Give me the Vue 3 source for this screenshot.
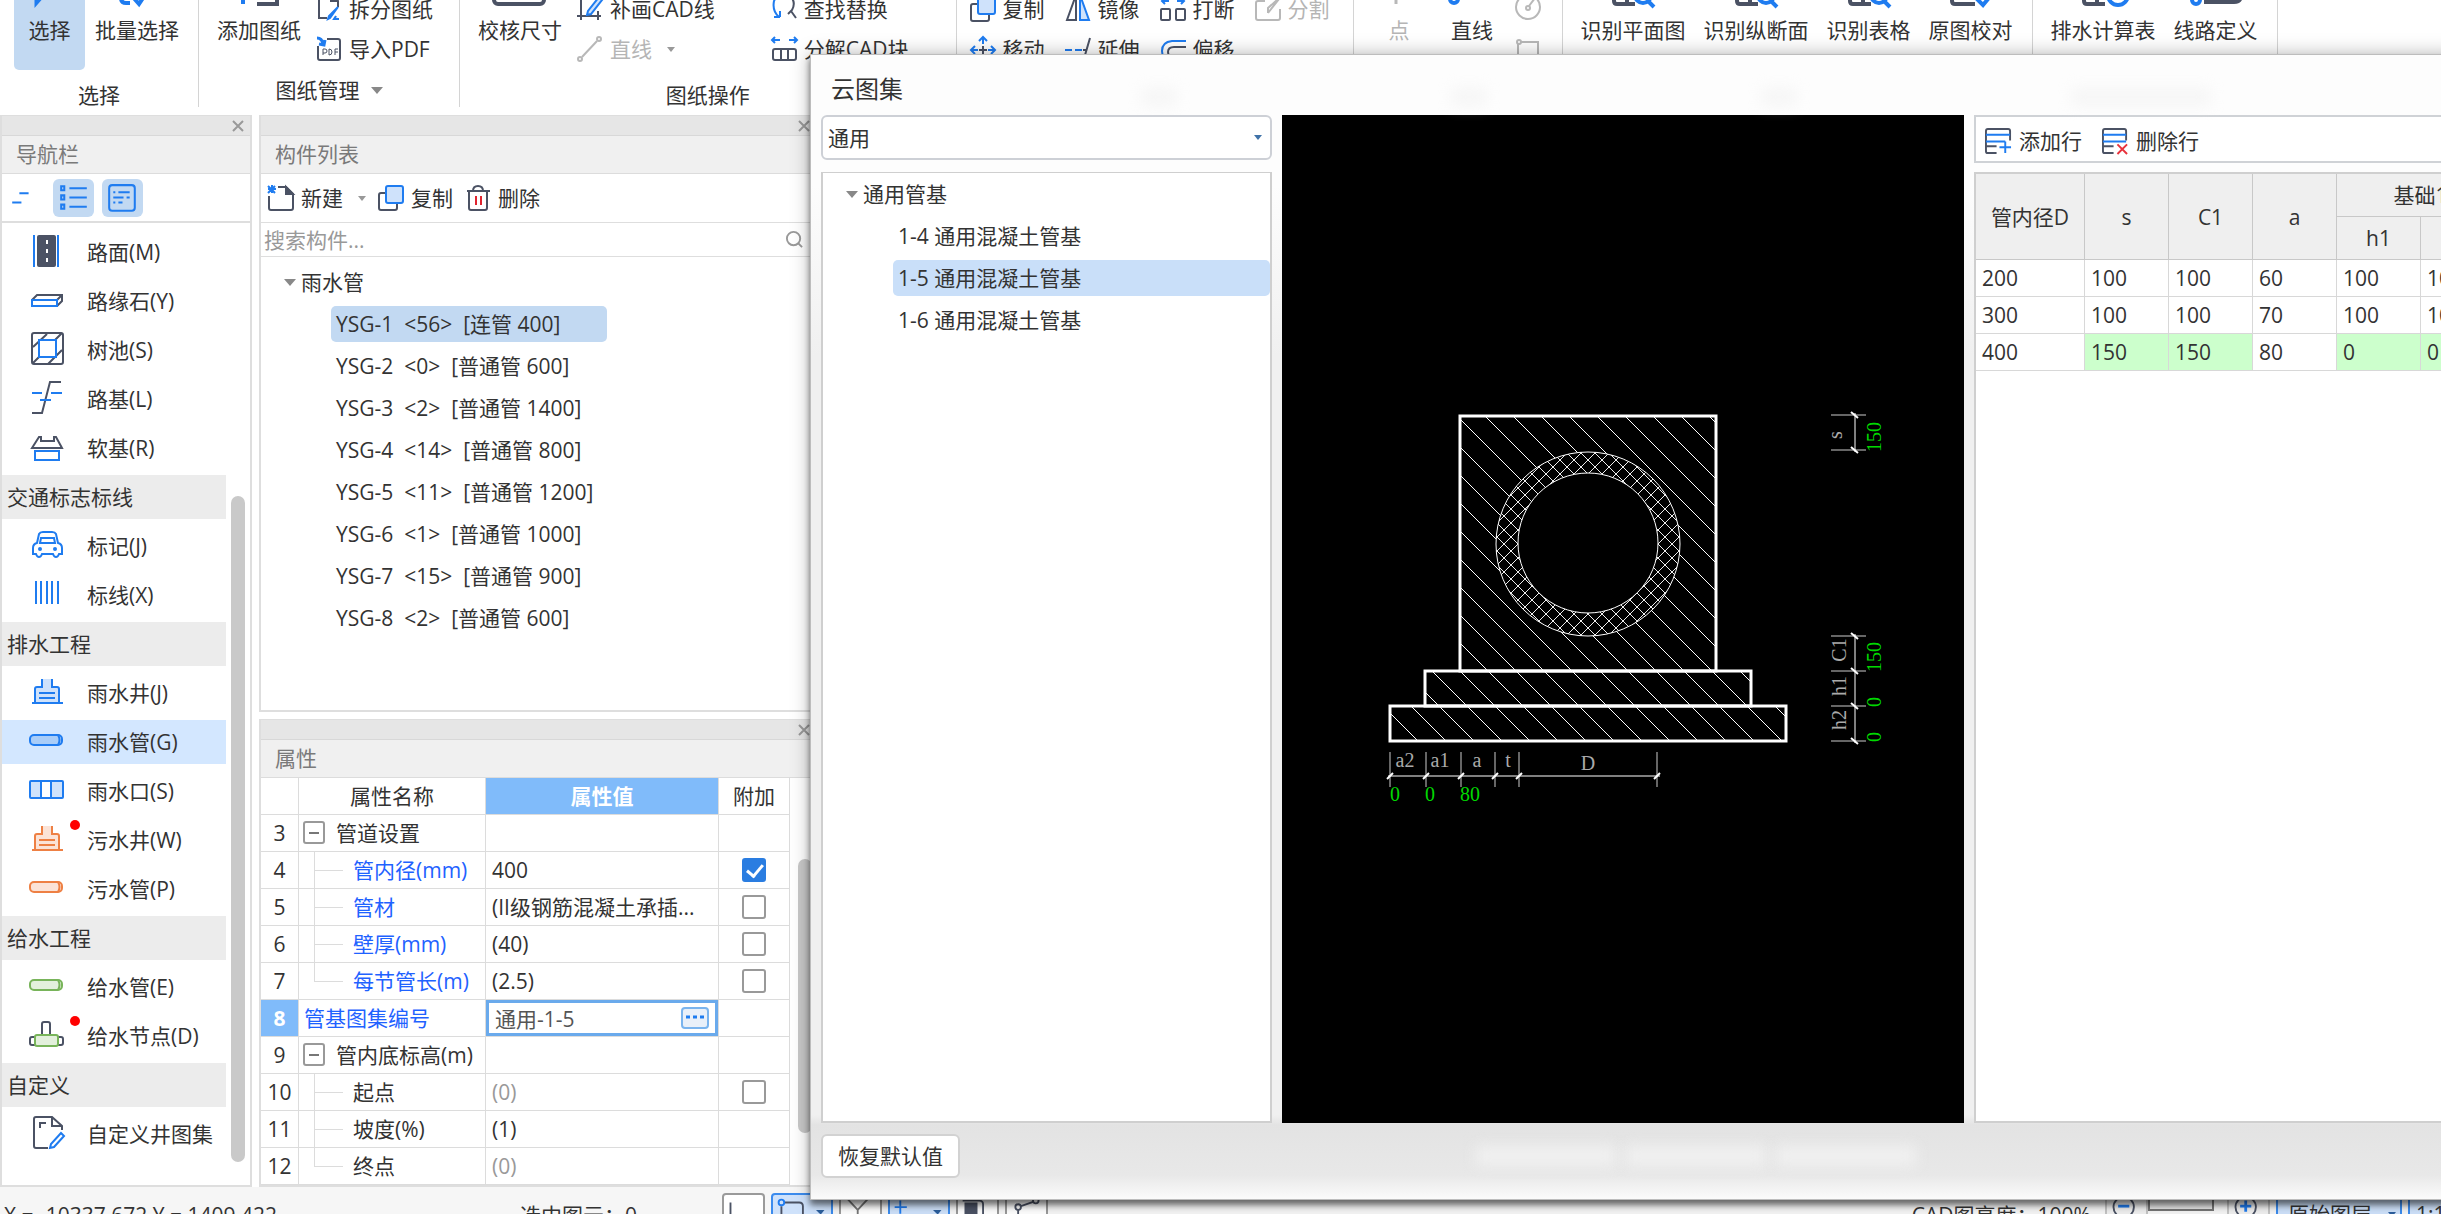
<script setup>
import { ref } from 'vue';

// icon markup, small ones are drawn on 26x26, nav ones on 36x36
const D = 'stroke="#4b5264"'
const B = 'stroke="#1f7cf0"'
const G = 'stroke="#b8b8b8"'
const well = (c, f) => `<path d="M7 28V14q0-2 2-2h5V4h10v8h5q2 0 2 2v14z" fill="${f}"/><path d="M14 4v8H9q-2 0-2 2v14M24 4v8h5q2 0 2 2v14M4 28h31M11 18h16M11 23h16" stroke="${c}"/>`
const pipe = (c, f) => `<rect x="2" y="11" width="32" height="10" rx="4" fill="${f}" stroke="${c}"/><path d="M30 11q3 5 0 10" stroke="${c}"/>`

const icons = {
    split: `<path d="M11 22H3V-2h12l7 7v6M15-2v7h7" ${D}/><path d="M22 11L14 22l-2 1 1-3z M20 20l-2 3h5" ${B} fill="#cfe2fb"/>`,
    pdf: `<path d="M11 3h11q2 0 2 2v17q0 2-2 2H4q-2 0-2-2V10" ${D}/><path d="M1 2q5 0 6 6M3 8l5 1 1-5" ${B} stroke-width="3"/><path d="M7 19v-6h2q2 0 2 2t-2 2H7M13 13v6q3 0 3-3t-3-3M19 19v-6h3M19 16h3" ${D} stroke-width="1"/>`,
    cadline: `<path d="M4-2v26M0 20h24M21 15v9M2 1h10" ${D}/><path d="M22 1l3 3-11 14-4 1 1-4z" ${B} fill="#cfe2fb"/>`,
    line: `<path d="M5 21L20 5" ${G}/><circle cx="3" cy="23" r="2" ${G}/><circle cx="22" cy="3" r="2" ${G}/>`,
    find: `<path d="M8 21Q1 15 3 5L6-1M9 21H3M9 21v-6" ${B}/><path d="M17-2q9 7 4 16l-4 4M20 15l5 7" ${D}/>`,
    explode: `<rect x="2" y="13" width="23" height="11" rx="2" ${D}/><path d="M10 13v11M17 13v11" ${D}/><path d="M1 4h8M4 1L1 4l3 3M18 4h8M23 1l3 3-3 3" ${B}/>`,
    copy: `<path d="M7 8H3q-2 0-2 2v13q0 2 2 2h14q2 0 2-2v-4" ${D}/><rect x="8" y="1" width="17" height="17" rx="2" ${B} fill="#cfe2fb"/>`,
    mirror: `<path d="M11-1v25H2z" ${D}/><path d="M15-1v25h9z" ${B} fill="#cfe2fb"/>`,
    breakup: `<rect x="1" y="13" width="9" height="11" rx="1" ${D}/><rect x="16" y="13" width="9" height="11" rx="1" ${D}/><path d="M2 5h7M5 2L2 5l3 3M17 5h7M21 2l3 3-3 3" ${B}/>`,
    cut: `<path d="M10 5H3q-2 0-2 2v15q0 2 2 2h20q2 0 2-2v-9M13 17L24 3M13 17v-5l9-8" ${G}/>`,
    move: `<path d="M13 8V1M9 5l4-4 4 4M8 14H1M5 10l-4 4 4 4M18 14h7M21 10l4 4-4 4M13 20v5M9 22l4 4 4-4" ${B}/><path d="M9 14h8M13 10v8" ${D}/>`,
    extend: `<path d="M0 14h7M10 14h7" ${B}/><path d="M18 14h4M25 2L18 26" ${D}/>`,
    offset: `<path d="M26 5H12Q2 6 2 15t9 10" ${B}/><path d="M26 11H14q-6 0-6 5t6 5h12" ${D}/>`,
    arc: `<circle cx="13" cy="11" r="12" ${G}/><circle cx="13" cy="12" r="2" ${G}/><path d="M14 10l6-8" ${G}/>`,
    box: `<path d="M3 6h20v20H3z" ${G}/><circle cx="4" cy="6" r="2" ${G} fill="#fff"/>`,
    create: `<path d="M10 2h8l7 7v14q0 2-2 2H3q-2 0-2-2V11" ${D}/><path d="M18 2v7h7z" ${D} fill="#4b5264"/><path d="M0 1l7 7M7 1L0 8M0 4h8M4 0v8" ${B}/>`,
    trash: `<path d="M2 6h23M4 6v17q0 2 2 2h14q2 0 2-2V6M8 6q0-5 5-5t5 5" ${D}/><path d="M11 11v9M16 11v9" stroke="#e0242f"/>`,
    addRow: `<path d="M26 13V3q0-2-2-2H3Q1 1 1 3v21q0 2 2 2h9M1 19h11" ${D}/><path d="M1 7h25M1 14h20M21 14v12M15 20h12" ${B}/>`,
    delRow: `<path d="M25 13V3q0-2-2-2H3Q1 1 1 3v21q0 2 2 2h9M1 19h11" ${D}/><path d="M1 7h24M1 14h24" ${B}/><path d="M16 17l10 10M26 17L16 27" stroke="#e8323c"/>`,
    // bottoms of the big ribbon buttons
    cursor: `<path d="M8 4v30l8-9" ${B} stroke-width="3"/>`,
    batch: `<path d="M6 6v22q0 5 5 5h4M17 26l7 8 8-12" ${B} stroke-width="4"/>`,
    addDrawing: `<path d="M6 6v28" ${B} stroke-width="4"/><path d="M20 34h20V6H20" ${D} stroke-width="4"/>`,
    check: `<rect x="-4" y="4" width="50" height="30" rx="4" ${D} stroke-width="4"/>`,
    point: `<path d="M19 14v20" ${G} stroke-width="3"/>`,
    bigLine: `<path d="M4 28L34-20" ${D} stroke-width="3"/><circle cx="4" cy="29" r="4" ${B} stroke-width="4"/>`,
    recog: `<path d="M24 34H6q-3 0-3-3V6h30M16 10v24" ${D} stroke-width="4"/><circle cx="32" cy="25" r="8" ${B} stroke-width="4"/><path d="M37 31l6 6" ${B} stroke-width="4"/>`,
    proof: `<path d="M26 34H6q-3 0-3-3V6h30" ${D} stroke-width="4"/><path d="M26 27l8 8 10-12" ${B} stroke-width="4"/>`,
    calc: `<path d="M24 34H6q-3 0-3-3V6h30M16 10v24" ${D} stroke-width="4"/><circle cx="37" cy="25" r="10" ${B} stroke-width="4"/><path d="M33 22l4 5 4-5" ${B} stroke-width="3"/>`,
    route: `<path d="M10 31h30q6 0 6-6" ${D} stroke-width="6"/><circle cx="2" cy="30" r="4" ${B} stroke-width="4"/>`,
    // navigation
    road: `<path d="M6 1v32M30 1v32" ${B}/><rect x="9" y="1" width="19" height="32" rx="2" fill="#4b5264"/><path d="M19 6v4M19 15v4M19 24v4" stroke="#fff"/>`,
    curb: `<path d="M4 17l5-5h25v6l-5 5M29 17l5-5" ${D}/><rect x="4" y="17" width="25" height="6" ${B} fill="#fff"/>`,
    tree: `<rect x="4" y="1" width="31" height="31" rx="2" ${D}/><path d="M5 15L19 2M27 8l7-7M5 31l7-7M20 32l14-14" ${D}/><rect x="11" y="8" width="17" height="17" ${B} fill="#fff"/>`,
    base: `<path d="M4 32h10L22 1h11" ${D}/><path d="M4 12h10M23 12h11M12 19h11" ${B}/>`,
    soft: `<path d="M4 18L11 7h2v4h13V7h2l6 11z" ${D}/><rect x="7" y="21" width="24" height="9" ${B}/>`,
    car: `<path d="M9 15l2-9q1-2 4-2h9q3 0 4 2l2 9q4 1 4 5v6h-3q-1 3-3 3t-3-3H14q-1 3-3 3t-3-3H5v-6q0-4 4-5z" ${B}/><path d="M12 15l1-5h13l1 5z" ${B}/><circle cx="12" cy="21" r="2" fill="#1f7cf0"/><circle cx="27" cy="21" r="2" fill="#1f7cf0"/>`,
    marks: `<path d="M8 4v23M13 4v23M19 4v23M24 4v23M30 4v23" ${B}/>`,
    well: well('#1f7cf0', '#cfe2fb'),
    pipe: pipe('#1f7cf0', '#a9cdf8'),
    inlet: `<rect x="2" y="8" width="33" height="17" rx="1" ${B} fill="#cfe2fb"/><path d="M13 8h10v17H13z" ${B} fill="#fff"/>`,
    sewWell: well('#ee8044', '#fbe3d7'),
    sewPipe: pipe('#ee8044', '#fbe3d7'),
    supPipe: pipe('#78b45a', '#e3f0dc'),
    node: `<path d="M14 18V6q0-2 2-2h4q2 0 2 2v12M7 19H4q-2 0-2 2v4q0 2 2 2h3M30 19h3q2 0 2 2v4q0 2-2 2h-3" ${D}/><rect x="7" y="17" width="23" height="11" rx="2" stroke="#78b45a" fill="#e3f0dc"/>`,
    custom: `<path d="M20 32H8q-2 0-2-2V3q0-2 2-2h16l10 9v4M24 1v9h10M12 12V7h6" ${D}/><path d="M33 17l3 3-10 11-4 1 1-4z" ${B}/>`,
}

const smallCols = [
    [{ icon: 'copy', text: '复制' }, { icon: 'move', text: '移动' }],
    [{ icon: 'mirror', text: '镜像' }, { icon: 'extend', text: '延伸' }],
    [{ icon: 'breakup', text: '打断' }, { icon: 'offset', text: '偏移' }],
    [{ icon: 'cut', text: '分割', off: true }],
]
const recogTools = [
    { icon: 'recog', text: '识别平面图' },
    { icon: 'recog', text: '识别纵断面' },
    { icon: 'recog', text: '识别表格' },
    { icon: 'proof', text: '原图校对' },
]
const tableTools = [
    { icon: 'calc', text: '排水计算表' },
    { icon: 'route', text: '线路定义' },
]

const activeNav = ref('雨水管(G)')
const navRows = [
    { text: '路面(M)', icon: 'road' },
    { text: '路缘石(Y)', icon: 'curb' },
    { text: '树池(S)', icon: 'tree' },
    { text: '路基(L)', icon: 'base' },
    { text: '软基(R)', icon: 'soft' },
    { text: '交通标志标线', head: true },
    { text: '标记(J)', icon: 'car' },
    { text: '标线(X)', icon: 'marks' },
    { text: '排水工程', head: true },
    { text: '雨水井(J)', icon: 'well' },
    { text: '雨水管(G)', icon: 'pipe' },
    { text: '雨水口(S)', icon: 'inlet' },
    { text: '污水井(W)', icon: 'sewWell', dot: true },
    { text: '污水管(P)', icon: 'sewPipe' },
    { text: '给水工程', head: true },
    { text: '给水管(E)', icon: 'supPipe' },
    { text: '给水节点(D)', icon: 'node', dot: true },
    { text: '自定义', head: true },
    { text: '自定义井图集', icon: 'custom' },
]

const search = ref('')
const activePipe = ref(0)
const pipes = [
    'YSG-1  <56>  [连管 400]',
    'YSG-2  <0>  [普通管 600]',
    'YSG-3  <2>  [普通管 1400]',
    'YSG-4  <14>  [普通管 800]',
    'YSG-5  <11>  [普通管 1200]',
    'YSG-6  <1>  [普通管 1000]',
    'YSG-7  <15>  [普通管 900]',
    'YSG-8  <2>  [普通管 600]',
]

const props = ref([
    { no: 3, name: '管道设置', kind: 'parent' },
    { no: 4, name: '管内径(mm)', kind: 'child', blue: true, value: '400', extra: true },
    { no: 5, name: '管材', kind: 'child', blue: true, value: '(II级钢筋混凝土承插...', extra: false },
    { no: 6, name: '壁厚(mm)', kind: 'child', blue: true, value: '(40)', extra: false },
    { no: 7, name: '每节管长(m)', kind: 'child last', blue: true, value: '(2.5)', extra: false },
    { no: 8, name: '管基图集编号', kind: 'plain', blue: true, value: '通用-1-5', edit: true },
    { no: 9, name: '管内底标高(m)', kind: 'parent' },
    { no: 10, name: '起点', kind: 'child', value: '(0)', grey: true, extra: false },
    { no: 11, name: '坡度(%)', kind: 'child', value: '(1)' },
    { no: 12, name: '终点', kind: 'child last', value: '(0)', grey: true },
])

const atlas = ref('通用')
const activeAtlas = ref(1)
const atlasItems = ['1-4 通用混凝土管基', '1-5 通用混凝土管基', '1-6 通用混凝土管基']

const sizes = [
    { cells: [200, 100, 100, 60, 100, 100], changed: [] },
    { cells: [300, 100, 100, 70, 100, 100], changed: [] },
    { cells: [400, 150, 150, 80, 0, 0], changed: [1, 2, 4, 5] },
]

// hatch lines, every one runs from the top (y 400) to the bottom (y 760)
const hatch = []
for (let c = 621; c < 1400; c += 28) hatch.push(c)
const cross = []
for (let c = -196; c <= 196; c += 14) cross.push(c)

const vTicks = [415, 450, 636, 671, 706, 741]
const hTicks = [1390, 1426, 1461, 1495, 1519, 1657]
</script>

<template>
    <div class="app">
        <header class="ribbon">
            <section class="group">
                <div class="tools toolsSelect">
                    <button class="big on"><svg viewBox="0 0 44 36" v-html="icons.cursor"></svg>选择</button>
                    <button class="big"><svg viewBox="0 0 44 36" v-html="icons.batch"></svg>批量选择</button>
                </div>
                <div class="groupName">选择</div>
            </section>
            <section class="group">
                <div class="tools toolsFiles">
                    <button class="big"><svg viewBox="0 0 44 36" v-html="icons.addDrawing"></svg>添加图纸</button>
                    <div class="smallList">
                        <button class="small"><svg viewBox="0 0 26 26" v-html="icons.split"></svg>拆分图纸</button>
                        <button class="small"><svg viewBox="0 0 26 26" v-html="icons.pdf"></svg>导入PDF</button>
                    </div>
                </div>
                <button class="groupName groupMenu">图纸管理<i class="arrow"></i></button>
            </section>
            <section class="group">
                <div class="tools toolsEdit">
                    <button class="big"><svg viewBox="0 0 44 36" v-html="icons.check"></svg>校核尺寸</button>
                    <div class="smallList">
                        <button class="small"><svg viewBox="0 0 26 26" v-html="icons.cadline"></svg>补画CAD线</button>
                        <button class="small off" disabled><svg viewBox="0 0 26 26" v-html="icons.line"></svg>直线<i class="arrow tiny"></i></button>
                    </div>
                    <div class="smallList farList">
                        <button class="small"><svg viewBox="0 0 26 26" v-html="icons.find"></svg>查找替换</button>
                        <button class="small"><svg viewBox="0 0 26 26" v-html="icons.explode"></svg>分解CAD块</button>
                    </div>
                </div>
                <div class="groupName">图纸操作</div>
            </section>
            <section class="group">
                <div class="tools toolsModify">
                    <div v-for="(col, i) in smallCols" :key="i" class="smallList">
                        <button v-for="t in col" :key="t.text" class="small" :class="{ off: t.off }" :disabled="t.off">
                            <svg viewBox="0 0 26 26" v-html="icons[t.icon]"></svg>{{ t.text }}
                        </button>
                    </div>
                </div>
                <div class="groupName"></div>
            </section>
            <section class="group">
                <div class="tools toolsDraw">
                    <button class="big off" disabled><svg viewBox="0 0 44 36" v-html="icons.point"></svg>点</button>
                    <button class="big"><svg viewBox="0 0 44 36" v-html="icons.bigLine"></svg>直线</button>
                    <div class="smallList">
                        <button class="small" aria-label="圆"><svg viewBox="0 0 26 26" v-html="icons.arc"></svg></button>
                        <button class="small" aria-label="矩形"><svg viewBox="0 0 26 26" v-html="icons.box"></svg></button>
                    </div>
                </div>
                <div class="groupName"></div>
            </section>
            <section v-for="(list, i) in [recogTools, tableTools]" :key="i" class="group">
                <div class="tools">
                    <button v-for="t in list" :key="t.text" class="big"><svg viewBox="0 0 44 36" v-html="icons[t.icon]"></svg>{{ t.text }}</button>
                </div>
                <div class="groupName"></div>
            </section>
        </header>

        <main class="work">
            <aside class="panel navPanel">
                <div class="grip"><button class="close" aria-label="关闭"><svg viewBox="0 0 12 12"><path d="M1 1l10 10M11 1L1 11" /></svg></button></div>
                <h2 class="panelTitle">导航栏</h2>
                <div class="navTools">
                    <button class="tool" aria-label="折叠"><svg viewBox="0 0 40 38"><path d="M15 14h9M8 23h9" stroke="#1f7cf0" /></svg></button>
                    <button class="tool lit" aria-label="列表"><svg viewBox="0 0 40 38"><path d="M16 9h17M16 18h17M16 27h17" stroke="#1f7cf0" /><path d="M8 7h3v4H8zM8 16h3v4H8zM8 25h3v4H8z" stroke="#1f7cf0" /></svg></button>
                    <button class="tool lit" aria-label="详情"><svg viewBox="0 0 40 38"><rect x="7" y="6" width="25" height="25" rx="3" stroke="#1f7cf0" /><path d="M11 13h2M16 13h11M11 18h10M24 18h3M11 23h2M16 23h4" stroke="#1f7cf0" /></svg></button>
                </div>
                <nav class="navBody">
                    <div class="navList">
                        <template v-for="r in navRows" :key="r.text">
                            <h3 v-if="r.head" class="navHead">{{ r.text }}</h3>
                            <button v-else class="navItem" :class="{ active: activeNav == r.text }" @click="activeNav = r.text">
                                <svg viewBox="0 0 36 36" v-html="icons[r.icon]"></svg>{{ r.text }}
                                <i v-if="r.dot" class="dot"></i>
                            </button>
                        </template>
                    </div>
                    <div class="scroll navScroll"></div>
                </nav>
            </aside>

            <div class="column">
                <section class="panel listPanel">
                    <div class="grip"><button class="close" aria-label="关闭"><svg viewBox="0 0 12 12"><path d="M1 1l10 10M11 1L1 11" /></svg></button></div>
                    <h2 class="panelTitle">构件列表</h2>
                    <div class="listTools">
                        <button class="small"><svg viewBox="0 0 26 26" v-html="icons.create"></svg>新建<i class="arrow tiny"></i></button>
                        <button class="small"><svg viewBox="0 0 26 26" v-html="icons.copy"></svg>复制</button>
                        <button class="small"><svg viewBox="0 0 26 26" v-html="icons.trash"></svg>删除</button>
                    </div>
                    <div class="search">
                        <input v-model="search" type="text" placeholder="搜索构件..." aria-label="搜索构件">
                        <svg viewBox="0 0 20 20"><circle cx="9" cy="9" r="7" /><path d="M14 14l4 4" /></svg>
                    </div>
                    <div class="tree">
                        <div class="treeRoot"><i class="arrow"></i>雨水管</div>
                        <button v-for="(p, i) in pipes" :key="p" class="treeItem" :class="{ active: activePipe == i }" @click="activePipe = i">{{ p }}</button>
                    </div>
                </section>

                <section class="panel propPanel">
                    <div class="grip"><button class="close" aria-label="关闭"><svg viewBox="0 0 12 12"><path d="M1 1l10 10M11 1L1 11" /></svg></button></div>
                    <h2 class="panelTitle">属性</h2>
                    <div class="propBody">
                        <table class="propTable">
                            <colgroup>
                                <col class="cNo"><col class="cName"><col class="cValue"><col class="cExtra">
                            </colgroup>
                            <thead>
                                <tr><th></th><th>属性名称</th><th class="valueHead">属性值</th><th>附加</th></tr>
                            </thead>
                            <tbody>
                                <tr v-for="p in props" :key="p.no">
                                    <td class="no" :class="{ current: p.edit }">{{ p.no }}</td>
                                    <td class="name" :class="[p.kind, { blue: p.blue }]"><span v-if="p.kind == 'parent'" class="minus"></span>{{ p.name }}</td>
                                    <td v-if="p.edit" class="editCell">
                                        <div class="editor">
                                            <input v-model="p.value" type="text" :aria-label="p.name">
                                            <button aria-label="选择图集"><svg viewBox="0 0 24 18"><path d="M3 8h4M10 8h4M17 8h4" stroke="#1f7cf0" stroke-width="3" /></svg></button>
                                        </div>
                                    </td>
                                    <td v-else class="value" :class="{ grey: p.grey }">{{ p.value }}</td>
                                    <td class="extra"><input v-if="p.extra !== undefined" v-model="p.extra" type="checkbox" :aria-label="p.name + '附加'"></td>
                                </tr>
                            </tbody>
                        </table>
                        <div class="scroll propScroll"></div>
                    </div>
                </section>
            </div>
        </main>

        <footer class="status">
            <span class="coords">X = -10337.672 Y = 1409.422</span>
            <span class="picked">选中图元：0</span>
            <div class="snaps">
                <button aria-label="正交"><svg viewBox="0 0 42 40"><path d="M7 8v22h24" stroke="#4b5264" /></svg></button>
                <button class="wide lit" aria-label="捕捉"><svg viewBox="0 0 62 40"><path d="M12 8h16q4 0 4 4v24M9 12v24" stroke="#4b5264" /><circle cx="9" cy="8" r="3" stroke="#1f7cf0" /><path d="M46 16h9l-4 5z" fill="#2c5f9e" /></svg></button>
                <button aria-label="交点"><svg viewBox="0 0 42 40"><path d="M6 3l12 13L30 3M18 16v20" stroke="#777" /></svg></button>
                <button class="wide lit" aria-label="坐标"><svg viewBox="0 0 62 40"><path d="M11 6v14M5 13h13" stroke="#1f7cf0" /><path d="M46 16h9l-4 5z" fill="#2c5f9e" /></svg></button>
                <button aria-label="图层"><svg viewBox="0 0 42 40"><path d="M7 8h14v24H7z" fill="#4b5264" /><path d="M5 6h18q4 0 4 4v22" stroke="#4b5264" /></svg></button>
                <button aria-label="折线"><svg viewBox="0 0 42 40"><path d="M15 12l14-5M12 15v20" stroke="#4b5264" /><circle cx="12" cy="13" r="3" stroke="#4b5264" /><circle cx="31" cy="6" r="3" stroke="#4b5264" /></svg></button>
            </div>
            <span class="light">CAD图亮度：100%</span>
            <div class="zooms">
                <button class="round" aria-label="调暗"><svg viewBox="0 0 42 40"><circle cx="18" cy="13" r="11" stroke="#4b5264" /><path d="M12 12h12" stroke="#1f7cf0" stroke-width="3" /></svg></button>
                <div class="slider"></div>
                <button class="round" aria-label="调亮"><svg viewBox="0 0 42 40"><circle cx="18" cy="13" r="11" stroke="#4b5264" /><path d="M12 12h12M18 6v12" stroke="#1f7cf0" stroke-width="3" /></svg></button>
                <button class="layer lit">原始图层<i class="arrow tiny"></i></button>
                <button class="layer lit scale">1:1</button>
            </div>
        </footer>

        <section class="dialog" role="dialog" aria-labelledby="dialogTitle">
            <div class="haze hazeTop"><i></i><i></i><i></i><i></i></div>
            <h1 id="dialogTitle">云图集</h1>
            <div class="dialogBody">
                <div class="side">
                    <div class="pick">
                        <select v-model="atlas" aria-label="图集"><option>通用</option></select>
                        <i class="arrow tiny"></i>
                    </div>
                    <div class="atlasTree">
                        <div class="treeRoot"><i class="arrow"></i>通用管基</div>
                        <button v-for="(a, i) in atlasItems" :key="a" class="treeItem" :class="{ active: activeAtlas == i }" @click="activeAtlas = i">{{ a }}</button>
                    </div>
                </div>

                <div class="canvas">
                    <svg viewBox="1282 115 682 1008">
                        <defs>
                            <clipPath id="body"><path d="M1460 416h256v255h35v35h35v35h-396v-35h35v-35h35z" /></clipPath>
                            <clipPath id="ring"><circle cx="1588" cy="544" r="92" /></clipPath>
                        </defs>
                        <g clip-path="url(#body)" stroke="#fff">
                            <line v-for="c in hatch" :key="c" :x1="c + 400" y1="400" :x2="c + 760" y2="760" />
                        </g>
                        <circle cx="1588" cy="544" r="92" fill="#000" />
                        <g clip-path="url(#ring)" stroke="#eee">
                            <template v-for="c in cross" :key="c">
                                <line :x1="1488 + c" y1="444" :x2="1688 + c" y2="644" />
                                <line :x1="1688 + c" y1="444" :x2="1488 + c" y2="644" />
                            </template>
                        </g>
                        <circle cx="1588" cy="544" r="92" stroke="#fff" />
                        <circle cx="1588" cy="543" r="70" fill="#000" stroke="#fff" />
                        <g stroke="#fff" stroke-width="3">
                            <rect x="1460" y="416" width="256" height="255" />
                            <rect x="1425" y="671" width="326" height="35" />
                            <rect x="1390" y="706" width="396" height="35" />
                        </g>
                        <g stroke="#ccc">
                            <path v-for="y in vTicks" :key="y" :d="`M1831 ${y}h35`" />
                            <path v-for="x in hTicks" :key="x" :d="`M${x} 752v35`" />
                        </g>
                        <g stroke="#fff">
                            <path v-for="y in vTicks" :key="y" :d="`M1851 ${y - 3}l7 6`" stroke-width="2" />
                            <path v-for="x in hTicks" :key="x" :d="`M${x - 3} 779l6-6`" stroke-width="2" />
                            <path d="M1855 413v39M1855 634v109M1388 776h272" />
                        </g>
                        <g class="dimName">
                            <text x="1405" y="767">a2</text>
                            <text x="1440" y="767">a1</text>
                            <text x="1477" y="767">a</text>
                            <text x="1508" y="767">t</text>
                            <text x="1588" y="770">D</text>
                            <text transform="translate(1842 435) rotate(-90)">s</text>
                            <text transform="translate(1846 650) rotate(-90)">C1</text>
                            <text transform="translate(1846 686) rotate(-90)">h1</text>
                            <text transform="translate(1846 720) rotate(-90)">h2</text>
                        </g>
                        <g class="dimValue">
                            <text x="1395" y="801">0</text>
                            <text x="1430" y="801">0</text>
                            <text x="1470" y="801">80</text>
                            <text transform="translate(1881 437) rotate(-90)">150</text>
                            <text transform="translate(1881 657) rotate(-90)">150</text>
                            <text transform="translate(1881 702) rotate(-90)">0</text>
                            <text transform="translate(1881 737) rotate(-90)">0</text>
                        </g>
                    </svg>
                </div>

                <div class="sizePane">
                    <div class="rowTools">
                        <button class="small"><svg viewBox="0 0 28 28" v-html="icons.addRow"></svg>添加行</button>
                        <button class="small"><svg viewBox="0 0 28 28" v-html="icons.delRow"></svg>删除行</button>
                    </div>
                    <div class="sizeBox">
                        <table class="sizeTable">
                            <colgroup>
                                <col class="cWide"><col span="5" class="cSize">
                            </colgroup>
                            <thead>
                                <tr>
                                    <th rowspan="2">管内径D</th>
                                    <th rowspan="2">s</th>
                                    <th rowspan="2">C1</th>
                                    <th rowspan="2">a</th>
                                    <th colspan="2">基础1</th>
                                </tr>
                                <tr><th>h1</th><th>a1</th></tr>
                            </thead>
                            <tbody>
                                <tr v-for="s in sizes" :key="s.cells[0]">
                                    <td v-for="(c, i) in s.cells" :key="i" :class="{ changed: s.changed.includes(i) }">{{ c }}</td>
                                </tr>
                            </tbody>
                        </table>
                    </div>
                </div>
            </div>
            <div class="dialogFoot">
                <button class="reset">恢复默认值</button>
                <div class="haze hazeFoot"><i></i><i></i><i></i></div>
            </div>
        </section>
    </div>
</template>

<style>
body {
    background: #fff;
}
</style>

<style scoped>
.app {
    position: relative;
    display: flex;
    flex-direction: column;
    height: 100vh;
    overflow: hidden;
    background: #fff;
    color: #333;
    font-family: "Open Sans", "Noto Sans CJK SC", sans-serif;
    font-size: 21px;
    line-height: 24px;
}

* {
    box-sizing: border-box;
}

button,
input,
select {
    font: inherit;
    color: inherit;
    border: 0;
    padding: 0;
    margin: 0;
    background: none;
    outline: none;
}

button {
    white-space: nowrap;
}

svg {
    display: block;
    flex: none;
    fill: none;
    stroke-width: 2;
    overflow: visible;
}

h1,
h2,
h3 {
    margin: 0;
    font-weight: 400;
}

.arrow {
    flex: none;
    width: 0;
    height: 0;
    border: 6px solid transparent;
    border-top: 7px solid #888;
    border-bottom: 0;
}

.arrow.tiny {
    border-width: 5px 4px 0;
}

/* ribbon */
.ribbon {
    display: flex;
    align-items: flex-end;
    flex: none;
    height: 115px;
    padding-bottom: 8px;
    overflow: hidden;
}

.group {
    flex: none;
    border-right: 1px solid #d4d4d4;
}

.tools {
    display: flex;
    align-items: flex-end;
    gap: 2px;
    padding: 0 11px 0 10px;
}

.toolsSelect {
    padding-left: 14px;
}

.toolsFiles {
    padding-right: 26px;
}

.toolsEdit {
    padding-right: 47px;
}

.toolsModify {
    gap: 15px;
    padding: 0 23px 0 8px;
}

.toolsDraw {
    padding-right: 21px;
}

.big {
    display: flex;
    flex-direction: column;
    align-items: center;
    gap: 12px;
    min-width: 71px;
    padding: 0 8px 28px;
    border-radius: 5px;
}

.big svg {
    width: 44px;
    height: 36px;
}

.big.on {
    background: #c2d9f2;
}

.off {
    color: #b5b5b5;
}

.smallList {
    display: flex;
    flex-direction: column;
    height: 81px;
    margin-left: 5px;
}

.farList {
    margin-left: 54px;
}

.small {
    display: flex;
    align-items: center;
    gap: 7px;
    height: 40px;
}

.small svg {
    width: 26px;
    height: 26px;
}

.small .arrow {
    margin-left: 8px;
    border-top-color: #999;
}

.groupName {
    height: 24px;
    margin-top: 13px;
    text-align: center;
}

.groupMenu {
    display: flex;
    align-items: center;
    justify-content: center;
    gap: 11px;
    width: 100%;
    height: 30px;
    margin-top: 7px;
    padding-bottom: 4px;
}

/* panels */
.work {
    display: flex;
    flex: 1;
    gap: 7px;
    min-height: 0;
}

.panel {
    display: flex;
    flex-direction: column;
    border: 2px solid #dedede;
    border-top-width: 1px;
    background: #fff;
}

.navPanel {
    width: 252px;
}

.column {
    display: flex;
    flex-direction: column;
    gap: 7px;
    width: 556px;
}

.grip {
    display: flex;
    justify-content: flex-end;
    align-items: center;
    flex: none;
    height: 20px;
    padding-right: 6px;
    background: #e6e6e6;
    border-bottom: 1px solid #d8d8d8;
}

.column .grip {
    padding-right: 3px;
}

.close svg {
    width: 12px;
    height: 12px;
    stroke: #999;
}

.panelTitle {
    flex: none;
    height: 38px;
    padding-left: 14px;
    background: #f0f0f0;
    border-bottom: 1px solid #dcdcdc;
    color: #7a7a7a;
    font-size: 21px;
    line-height: 36px;
}

.navTools {
    display: flex;
    align-items: center;
    gap: 8px;
    flex: none;
    height: 49px;
    padding-left: 2px;
    border-bottom: 2px solid #dedede;
}

.tool {
    width: 41px;
    height: 38px;
    border-radius: 6px;
}

.tool.lit {
    background: #c2d9f2;
}

.navBody {
    display: flex;
    flex: 1;
    gap: 5px;
    min-height: 0;
}

.navList {
    display: flex;
    flex-direction: column;
    gap: 5px;
    width: 224px;
    padding-top: 7px;
}

.navHead {
    flex: none;
    padding-left: 5px;
    background: #ececec;
    font-size: 21px;
    line-height: 44px;
}

.navItem {
    position: relative;
    display: flex;
    align-items: center;
    flex: none;
    gap: 23px;
    height: 44px;
    padding-left: 26px;
}

.navItem svg {
    width: 36px;
    height: 36px;
}

.navItem.active {
    background: #d3e7ff;
}

.dot {
    position: absolute;
    left: 68px;
    top: 2px;
    width: 10px;
    height: 10px;
    border-radius: 50%;
    background: #f00;
}

.scroll {
    flex: none;
    width: 14px;
    border-radius: 7px;
    background: #c9c9c9;
}

.navScroll {
    margin: 273px 0 23px;
}

.listPanel {
    flex: none;
    height: 597px;
}

.listTools {
    display: flex;
    align-items: center;
    gap: 12px;
    flex: none;
    height: 49px;
    padding-left: 7px;
    border-bottom: 1px solid #dedede;
}

.search {
    display: flex;
    align-items: center;
    flex: none;
    height: 34px;
    padding: 0 9px 0 3px;
    border-bottom: 1px solid #dedede;
}

.search input {
    flex: 1;
    min-width: 0;
}

.search input::placeholder {
    color: #999;
}

.search svg {
    width: 19px;
    height: 19px;
    stroke: #999;
}

.tree,
.atlasTree {
    display: flex;
    flex-direction: column;
    align-items: flex-start;
}

.tree {
    padding: 4px 0 0 23px;
}

.treeRoot {
    display: flex;
    align-items: center;
    gap: 5px;
    height: 42px;
}

.treeItem {
    width: 276px;
    height: 36px;
    margin: 3px 0 3px 47px;
    padding-left: 5px;
    border-radius: 5px;
    text-align: left;
    white-space: pre;
}

.treeItem.active {
    background: #c2d9f2;
}

.propPanel {
    flex: 1;
    min-height: 0;
}

.propBody {
    display: flex;
    align-items: flex-start;
    flex: 1;
    gap: 8px;
    min-height: 0;
    overflow: hidden;
}

.propTable {
    table-layout: fixed;
    width: 529px;
    border-collapse: separate;
    border-spacing: 0;
}

.cNo {
    width: 38px;
}

.cName {
    width: 187px;
}

.cValue {
    width: 233px;
}

.cExtra {
    width: 71px;
}

.propTable th,
.propTable td {
    height: 37px;
    padding: 0;
    border: 1px solid #dcdcdc;
    border-left-width: 0;
    border-top-width: 0;
    font-weight: 400;
    white-space: nowrap;
}

.propTable .valueHead {
    background: #80bbfa;
    color: #fff;
    font-weight: 700;
}

.propTable .no {
    text-align: center;
}

.propTable .current {
    background: #80bbfa;
    color: #fff;
    font-weight: 700;
}

.propTable .name {
    position: relative;
    padding-left: 5px;
}

.propTable .parent {
    padding-left: 37px;
}

.propTable .child {
    padding-left: 54px;
}

.propTable .blue {
    color: #1f62ff;
}

/* tree lines in front of child names */
.child::before {
    content: "";
    position: absolute;
    left: 15px;
    top: 0;
    bottom: 0;
    border-left: 1px solid #dcdcdc;
}

.last::before {
    bottom: 50%;
}

.child::after {
    content: "";
    position: absolute;
    left: 15px;
    top: 50%;
    width: 29px;
    border-top: 1px solid #dcdcdc;
}

.minus {
    position: absolute;
    left: 4px;
    top: 6px;
    width: 22px;
    height: 23px;
    border: 2px solid #999;
    border-radius: 3px;
}

.minus::after {
    content: "";
    position: absolute;
    left: 4px;
    top: 9px;
    width: 10px;
    border-top: 2px solid #777;
}

.propTable .value {
    padding-left: 6px;
}

.propTable .grey {
    color: #999;
}

.editor {
    display: flex;
    align-items: center;
    height: 36px;
    padding: 0 6px;
    border: 3px solid #6aaaec;
}

.editor input {
    flex: 1;
    min-width: 0;
    height: 28px;
    color: #555;
}

.editor button {
    width: 28px;
    height: 22px;
    border: 2px solid #7ab4ee;
    border-radius: 4px;
    background: #e9f0f9;
}

.extra {
    text-align: center;
}

.extra input {
    appearance: none;
    display: block;
    position: relative;
    width: 24px;
    height: 24px;
    margin: 0 auto;
    border: 2px solid #999;
    border-radius: 3px;
    background: #fff;
}

.extra input:checked {
    border-color: #2a7de1;
    background: #2a7de1;
}

.extra input:checked::after {
    content: "";
    position: absolute;
    left: 6px;
    top: 1px;
    width: 7px;
    height: 13px;
    border: solid #fff;
    border-width: 0 3px 3px 0;
    transform: rotate(40deg);
}

.propScroll {
    height: 274px;
    margin-top: 81px;
}

/* status bar */
.status {
    display: flex;
    align-items: flex-start;
    flex: none;
    height: 27px;
    overflow: hidden;
    padding-top: 6px;
    background: #f6f6f6;
}

.status span {
    flex: none;
    white-space: nowrap;
    line-height: 44px;
}

.coords {
    width: 516px;
    padding-left: 4px;
}

.picked {
    width: 206px;
    padding-left: 4px;
}

.snaps,
.zooms {
    display: flex;
    flex: none;
    gap: 6px;
}

.status button {
    flex: none;
    width: 43px;
    height: 42px;
    border: 2px solid #9a9a9a;
    border-radius: 4px;
    background: #fff;
}

.status .wide {
    width: 62px;
}

.status .round {
    border-color: #c4c4c4;
    background: #f0f0f0;
}

.status .lit {
    border-color: #3c8cee;
    background: #cfe2fb;
}

.status .light {
    margin-left: auto;
    padding-right: 14px;
}

.slider {
    flex: none;
    width: 66px;
    height: 18px;
    margin: 0 7px 0 -6px;
    border: 2px solid #777;
    background: #e8e8e8;
}

.zooms {
    width: 336px;
}

.status .zooms .layer {
    display: flex;
    align-items: center;
    gap: 16px;
    width: 126px;
    padding-left: 10px;
}

.status .zooms .scale {
    padding-left: 6px;
}

.layer .arrow {
    border-top-color: #2c5f9e;
}

/* dialog */
.dialog {
    position: absolute;
    top: 54px;
    bottom: 14px;
    left: 810px;
    right: -72px;
    display: flex;
    flex-direction: column;
    padding: 0 10px;
    border: 1px solid #bdbdbd;
    background: linear-gradient(#fdfdfd 0, #fdfdfd 130px, #f0f0f0 300px, #f0f0f0 1060px, #e3e3e3 1070px, #e8e8e8 1120px, #fbfbfb 100%);
    box-shadow: 0 0 18px rgba(0, 0, 0, 0.28), 0 5px 6px rgba(0, 0, 0, 0.5);
}

.dialog h1 {
    flex: none;
    padding: 4px 0 0 10px;
    height: 60px;
    font-size: 24px;
    line-height: 60px;
}

.haze {
    position: absolute;
    display: flex;
    pointer-events: none;
}

.haze i {
    height: 20px;
    background: #ededed;
    filter: blur(7px);
}

.hazeTop {
    top: 32px;
    left: 330px;
}

.hazeTop i {
    width: 36px;
    margin-right: 274px;
    opacity: 0.4;
}

.hazeTop i:last-child {
    width: 140px;
    margin-right: 0;
}

.dialogBody {
    display: grid;
    grid-template-columns: 451px 682fr 528fr;
    gap: 10px;
    flex: 1;
    min-height: 0;
}

.side,
.sizePane {
    display: flex;
    flex-direction: column;
    min-width: 0;
}

.side {
    gap: 12px;
}

.pick {
    position: relative;
    flex: none;
}

.pick select {
    appearance: none;
    display: block;
    width: 100%;
    height: 45px;
    padding-left: 5px;
    border: 2px solid #cdd0d6;
    border-radius: 6px;
    background: #fff;
}

.pick .arrow {
    position: absolute;
    right: 10px;
    top: 20px;
    border-top-color: #3f72a8;
}

.atlasTree {
    flex: 1;
    padding: 0 0 0 23px;
    border: 2px solid #cfcfcf;
    border-top-width: 1px;
    background: #fff;
}

.atlasTree .treeItem {
    width: auto;
    align-self: stretch;
    margin-right: 0;
}

.atlasTree .treeItem.active {
    background: #c9dff9;
}

.canvas {
    min-width: 0;
    min-height: 0;
    background: #000;
}

.canvas svg {
    width: 100%;
    height: 100%;
    stroke-width: 1;
}

.canvas text {
    font-family: "Liberation Serif", serif;
    font-size: 20px;
    text-anchor: middle;
}

.dimName {
    fill: #aaa;
}

.dimValue {
    fill: #00d800;
}

.sizePane {
    gap: 9px;
}

.rowTools {
    display: flex;
    align-items: center;
    gap: 20px;
    flex: none;
    height: 48px;
    padding: 4px 0 0 9px;
    border: 2px solid #cfd2d6;
    background: #fff;
}

.rowTools svg {
    width: 27px;
    height: 27px;
}

.sizeBox {
    flex: 1;
    overflow: hidden;
    border: 2px solid #cfcfcf;
    background: #fff;
}

.sizeTable {
    table-layout: fixed;
    width: 529px;
    border-collapse: separate;
    border-spacing: 0;
}

.cWide {
    width: 109px;
}

.cSize {
    width: 84px;
}

.sizeTable th,
.sizeTable td {
    padding: 0;
    border: 1px solid #c8c8c8;
    border-left-width: 0;
    border-top-width: 0;
    font-weight: 400;
}

.sizeTable th {
    height: 43px;
    background: #efefef;
}

.sizeTable td {
    height: 37px;
    padding-left: 6px;
    border-color: #d8d8d8;
}

.sizeTable .changed {
    background: #ccffcc;
}

.dialogFoot {
    display: flex;
    align-items: center;
    flex: none;
    height: 76px;
    padding-bottom: 10px;
    position: relative;
}

.reset {
    height: 44px;
    padding: 0 15px;
    border: 2px solid #d2d2d2;
    border-radius: 6px;
    background: #fff;
}

.hazeFoot {
    left: 655px;
    gap: 10px;
}

.hazeFoot i {
    width: 140px;
    background: #f0f0f0;
}
</style>
